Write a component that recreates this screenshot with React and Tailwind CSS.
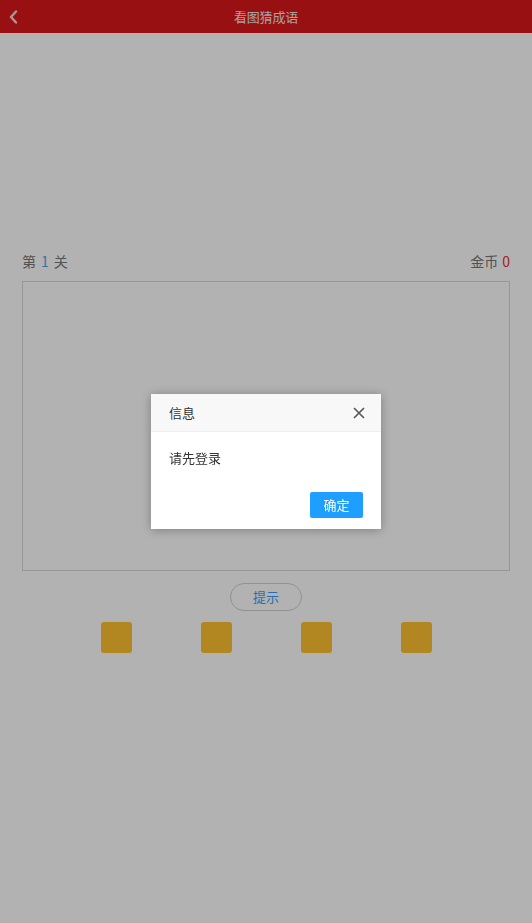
import React from 'react';

const FONT = { fontFamily: '"Noto Sans CJK SC", "Noto Sans", sans-serif' };

export default function App() {
  const slots = [0, 1, 2, 3];

  return (
    <div className="relative min-h-[923px] bg-white" style={FONT}>
      {/* header */}
      <div className="h-[33px] bg-[#dc181a] flex items-center relative">
        <div className="absolute left-[8px] top-[10px]">
          <svg width="12" height="14" viewBox="0 0 12 14" fill="none">
            <polyline points="8,1.5 3,7 8,12.5" stroke="#f4d8d8" strokeWidth="2.4" strokeLinecap="round" strokeLinejoin="round" />
          </svg>
        </div>
        <div className="flex-1 text-center text-[13px] text-[#f2e6e6] tracking-[-0.2px]">看图猜成语</div>
      </div>

      {/* level / coins */}
      <div className="mt-[218px] px-[22px] flex justify-between items-center h-[20px] text-[14px] text-[#777]">
        <span>第<span className="text-[#4aa8f0] mx-[5px]">1</span>关</span>
        <span>金币<span className="text-[#e62e2e] ml-[4px]">0</span></span>
      </div>

      <div className="mx-[22px] mt-[10px] h-[290px] border border-[#d8d8d8]"></div>

      <div className="flex justify-center mt-[12px]">
        <button className="w-[72px] h-[28px] rounded-full border border-[#d0d0d0] text-[13px] text-[#3c9dfc]">提示</button>
      </div>

      <div className="flex justify-center mt-[11px]">
        {slots.map((i) => (
          <div key={i} className="w-[100px] flex justify-center">
            <div className="w-[31px] h-[31px] rounded-[3px] bg-[#ffc02e]"></div>
          </div>
        ))}
      </div>

      {/* shade */}
      <div className="fixed inset-0 bg-black/30"></div>

      {/* dialog */}
      <div className="fixed inset-0 flex items-center justify-center">
        <div className="w-[230px] bg-white shadow-[0_1px_10px_rgba(0,0,0,0.3)]">
          <div className="h-[38px] bg-[#f8f8f8] border-b border-[#eee] flex items-center justify-between px-[18px]">
            <span className="text-[13px] text-[#333]">信息</span>
            <svg width="12" height="12" viewBox="0 0 12 12" className="mr-[-2px]">
              <path d="M1 1 L11 11 M11 1 L1 11" stroke="#555" strokeWidth="1.6" />
            </svg>
          </div>
          <div className="px-[18px] pt-[16px] text-[13px] leading-[20px] text-[#333]">请先登录</div>
          <div className="flex justify-end px-[18px] pt-[24px] pb-[11px]">
            <button className="w-[53px] h-[26px] rounded-[2px] bg-[#1e9fff] text-white text-[13px]">确定</button>
          </div>
        </div>
      </div>
    </div>
  );
}
